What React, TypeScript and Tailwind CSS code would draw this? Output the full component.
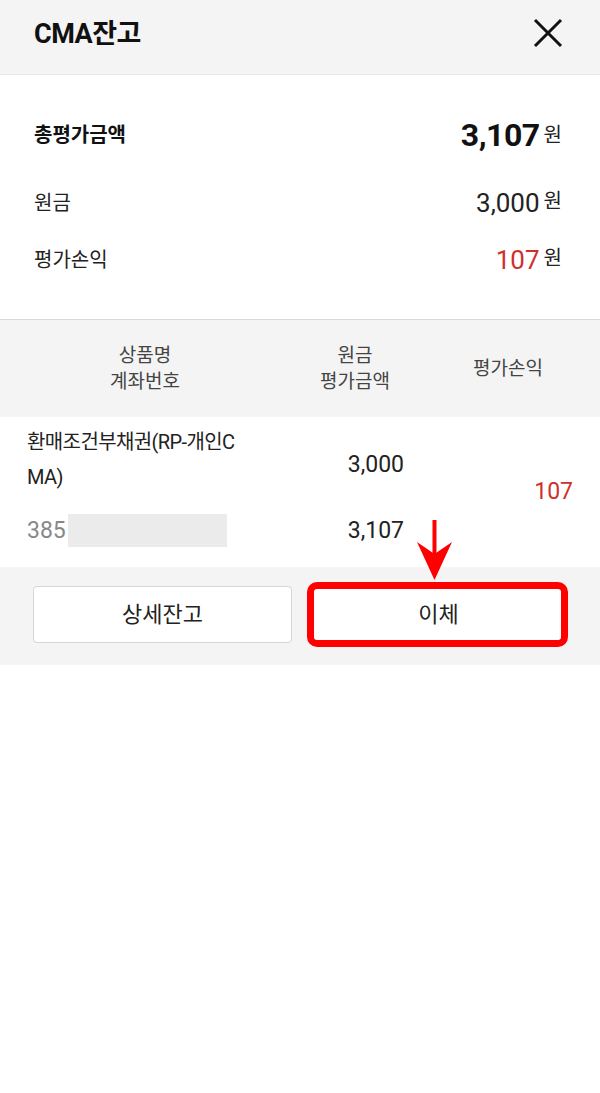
import React from "react";

const FONT = "font-['Roboto','Noto_Sans_CJK_KR',sans-serif]";

function CloseIcon() {
  return (
    <svg width="30" height="30" viewBox="0 0 30 30" className="text-[#111]">
      <path d="M2 2 L28 28 M28 2 L2 28" stroke="currentColor" strokeWidth="3" fill="none" />
    </svg>
  );
}

function SummaryRow({
  label,
  value,
  bold,
  red,
  className,
}: {
  label: string;
  value: string;
  bold?: boolean;
  red?: boolean;
  className?: string;
}) {
  return (
    <div className={`h-[40px] flex items-center justify-between ${className ?? ""}`}>
      <span className={bold ? "text-[20px] font-bold text-[#111]" : "text-[20px] text-[#222]"}>{label}</span>
      <span className="flex items-baseline gap-[4px]">
        <span
          className={
            bold
              ? "text-[32px] font-bold text-[#111] tracking-[-0.5px]"
              : red
              ? "text-[26px] text-[#d0302b]"
              : "text-[26px] text-[#222]"
          }
        >
          {value}
        </span>
        <span className="text-[20px] text-[#222] relative top-[-4px]">원</span>
      </span>
    </div>
  );
}

export default function App() {
  return (
    <div className={`${FONT} w-[600px] min-h-[1093px] bg-white`}>
      {/* Header */}
      <div className="h-[75px] bg-[#f4f4f4] border-b border-[#e8e8e8] flex items-center justify-between pl-[34px] pr-[37px]">
        <h1 className="text-[27px] font-bold text-[#111] tracking-[-0.5px] pb-[6px]">CMA잔고</h1>
        <div className="pb-[8px]">
          <CloseIcon />
        </div>
      </div>

      {/* Summary */}
      <div className="pl-[34px] pr-[38px] pt-[40px] pb-[39px] border-b border-[#d9d9d9]">
        <SummaryRow label="총평가금액" value="3,107" bold />
        <SummaryRow label="원금" value="3,000" className="mt-[28px]" />
        <SummaryRow label="평가손익" value="107" red className="mt-[17px]" />
      </div>

      {/* Table header */}
      <div className="h-[97px] bg-[#f4f4f4] grid grid-cols-[290px_130px_1fr] items-center text-[19px] text-[#444] leading-[26px] text-center">
        <div>
          <div>상품명</div>
          <div>계좌번호</div>
        </div>
        <div>
          <div>원금</div>
          <div>평가금액</div>
        </div>
        <div className="pr-[4px]">평가손익</div>
      </div>

      {/* Table row */}
      <div className="relative h-[150px] bg-white flex text-[20px] text-[#222]">
        <div className="w-[300px] pl-[27px] pt-[8px]">
          <div className="leading-[35px] tracking-[-0.6px]">
            환매조건부채권(RP-개인C
            <br />
            MA)
          </div>
          <div className="mt-[18px] flex items-center leading-[35px]">
            <span className="text-[#888] text-[23px]">385</span>
            <span className="ml-[2px] w-[159px] h-[33px] bg-[#ebebeb]" />
          </div>
        </div>
        <div className="w-[104px] flex flex-col items-end pt-[30px] gap-[31px] leading-[35px] text-[23px]">
          <span>3,000</span>
          <span>3,107</span>
        </div>
        <div className="flex-1 flex items-center justify-end pr-[27px] text-[23px] text-[#d0302b]">107</div>

        {/* Annotation arrow */}
        <svg
          className="absolute left-[417px] top-[103px]"
          width="36"
          height="60"
          viewBox="0 0 36 60"
        >
          <rect x="15.5" y="0" width="4" height="40" fill="#ff0000" />
          <path d="M0 22 L17.5 34 L35 22 L17.5 60 Z" fill="#ff0000" />
        </svg>
      </div>

      {/* Buttons */}
      <div className="bg-[#f4f4f4] px-[33px] pt-[19px] pb-[22px] flex gap-[18px]">
        <button className="flex-1 h-[57px] bg-white border border-[#d6d6d6] rounded-[4px] text-[22px] text-[#222]">
          상세잔고
        </button>
        <div className="flex-1 relative">
          <button className="w-full h-[57px] bg-white rounded-[4px] text-[22px] text-[#222]">이체</button>
          <div className="absolute left-[-3px] right-[-1px] top-[-4px] bottom-[-4px] border-[7px] border-[#ff0000] rounded-[10px] pointer-events-none" />
        </div>
      </div>
    </div>
  );
}
